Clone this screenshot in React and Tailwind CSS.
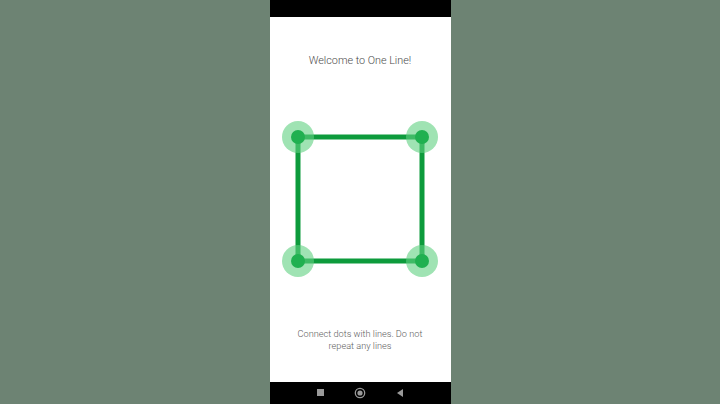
export default function App() {
  // dot centres inside the board svg (board starts at phone x=0, y=117)
  const dots = [
    [28, 20],
    [152, 20],
    [152, 144],
    [28, 144],
  ];

  return (
    <div className="w-[720px] h-[404px] bg-[#6d8373] flex justify-center" style={{ fontFamily: "Roboto, 'Noto Sans', sans-serif" }}>
      <div className="w-[181px] h-full flex flex-col">
        <div className="h-[17px] bg-black" />
        <div className="flex-1 bg-white flex flex-col items-center">
          <div className="pt-[37px] text-[10.8px] leading-[14px] font-light text-[#4a4a4a]">Welcome to One Line!</div>
          <svg className="mt-[49px]" width="181" height="160" viewBox="0 0 181 160">
            <polygon
              points={dots.map((d) => d.join(",")).join(" ")}
              fill="none"
              stroke="#0d9b3c"
              strokeWidth="5"
              strokeLinejoin="round"
            />
            {dots.map(([x, y]) => (
              <g key={`${x}-${y}`}>
                <circle cx={x} cy={y} r="16" fill="#5fd080" opacity="0.6" />
                <circle cx={x} cy={y} r="7" fill="#20b050" />
              </g>
            ))}
          </svg>
          <div className="mt-[51px] text-[9.2px] leading-[12px] font-light text-[#5e5e5e] text-center">
            Connect dots with lines. Do not
            <br />
            repeat any lines
          </div>
        </div>
        <div className="h-[22px] bg-black flex items-center justify-center gap-[30px] pb-[1px]">
          <div className="w-[7px] h-[7px] bg-[#9a9a9a]" />
          <svg width="12" height="12" viewBox="0 0 12 12">
            <circle cx="6" cy="6" r="4.7" fill="none" stroke="#9a9a9a" strokeWidth="1.3" />
            <circle cx="6" cy="6" r="2.6" fill="#9a9a9a" />
          </svg>
          <svg width="8" height="10" viewBox="0 0 8 10">
            <polygon points="7,1 7,9 1,5" fill="#9a9a9a" />
          </svg>
        </div>
      </div>
    </div>
  );
}
